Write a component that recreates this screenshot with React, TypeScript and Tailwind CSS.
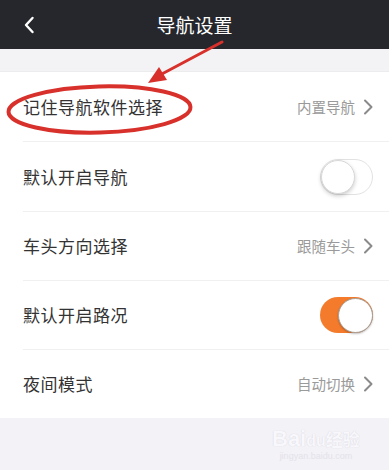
import React from "react";

const font = { fontFamily: '"Noto Sans CJK SC", "Noto Sans", sans-serif' };

function Chevron() {
  return (
    <svg width="10" height="16" viewBox="0 0 10 16" className="ml-[8px]">
      <path d="M2 1.5 L8.5 8 L2 14.5" fill="none" stroke="#8a8a8a" strokeWidth="2" strokeLinecap="round" strokeLinejoin="round" />
    </svg>
  );
}

function Toggle({ on }: { on: boolean }) {
  if (on) {
    return (
      <div className="w-[53px] h-[36px] rounded-full bg-[#f47b2c] flex items-center justify-end">
        <div className="w-[35px] h-[35px] rounded-full bg-white border-[1.5px] border-[#a89e96] shadow-[0_1px_2px_rgba(0,0,0,0.25)]" />
      </div>
    );
  }
  return (
    <div className="w-[53px] h-[36px] rounded-full bg-white border border-[#e2e2e2] flex items-center">
      <div className="w-[34px] h-[34px] rounded-full bg-white border border-[#d8d8d8] shadow-[0_2px_4px_rgba(0,0,0,0.2)]" />
    </div>
  );
}

type Row = { label: string; h: string; value?: string; toggle?: boolean; last?: boolean };

export default function App() {
  const rows: Row[] = [
    { label: "记住导航软件选择", h: "h-[70px]", value: "内置导航" },
    { label: "默认开启导航", h: "h-[70px]", toggle: false },
    { label: "车头方向选择", h: "h-[69px]", value: "跟随车头" },
    { label: "默认开启路况", h: "h-[69px]", toggle: true },
    { label: "夜间模式", h: "h-[68px]", value: "自动切换", last: true },
  ];
  return (
    <div className="relative w-[389px] h-[470px] overflow-hidden bg-[#f3f2f6] flex flex-col" style={font}>
      <div className="h-[49px] bg-[#26272c] flex items-center justify-center relative shrink-0">
        <svg width="12" height="18" viewBox="0 0 12 18" className="absolute left-[23px] top-[16px]">
          <path d="M9.5 2 L3 9 L9.5 16" fill="none" stroke="#ffffff" strokeWidth="2.4" strokeLinecap="round" strokeLinejoin="round" />
        </svg>
        <span className="text-white text-[19px] leading-none">导航设置</span>
      </div>
      <div className="h-[23px] bg-[#f3f3f5] border-b border-[#ececec] shrink-0" />
      <div className="bg-white shrink-0">
        {rows.map((r) => (
          <div key={r.label} className={`${r.h} pl-[23px] flex`}>
            <div className={`flex-1 flex items-center justify-between pr-[16px] ${r.last ? "" : "border-b border-[#f0f0f0]"}`}>
              <span className="text-[17px] text-[#333333] tracking-[0.5px]">{r.label}</span>
              {r.toggle === undefined ? (
                <div className="flex items-center">
                  <span className="text-[14.5px] text-[#9a9a9a]">{r.value}</span>
                  <Chevron />
                </div>
              ) : (
                <Toggle on={r.toggle} />
              )}
            </div>
          </div>
        ))}
      </div>
      <div className="flex-1 bg-[#f3f2f7] relative">
        <div className="absolute left-[272px] top-[10px] flex flex-col items-center">
          <span className="text-[22px] leading-none font-bold text-[#f8f7fb] [text-shadow:0_0_1px_#cfcdd6]" style={{ fontFamily: '"Liberation Sans", sans-serif' }}>
            Bai<span className="text-[16px]">du</span><span className="text-[17px]" style={font}>经验</span>
          </span>
          <span className="text-[9px] leading-none mt-[2px] text-[#e4e2ea]" style={{ fontFamily: '"Liberation Sans", sans-serif' }}>jingyan.baidu.com</span>
        </div>
      </div>
      <svg className="absolute left-0 top-0 pointer-events-none" width="389" height="470" viewBox="0 0 389 470">
        <ellipse cx="99.5" cy="109.5" rx="91" ry="23" fill="none" stroke="#d8302b" strokeWidth="4" transform="rotate(-1.5 99.5 109.5)" />
        <line x1="222" y1="42" x2="160" y2="75" stroke="#d8302b" strokeWidth="3" strokeLinecap="round" />
        <polygon points="148,83 159,67 167,80" fill="#d8302b" />
      </svg>
    </div>
  );
}
